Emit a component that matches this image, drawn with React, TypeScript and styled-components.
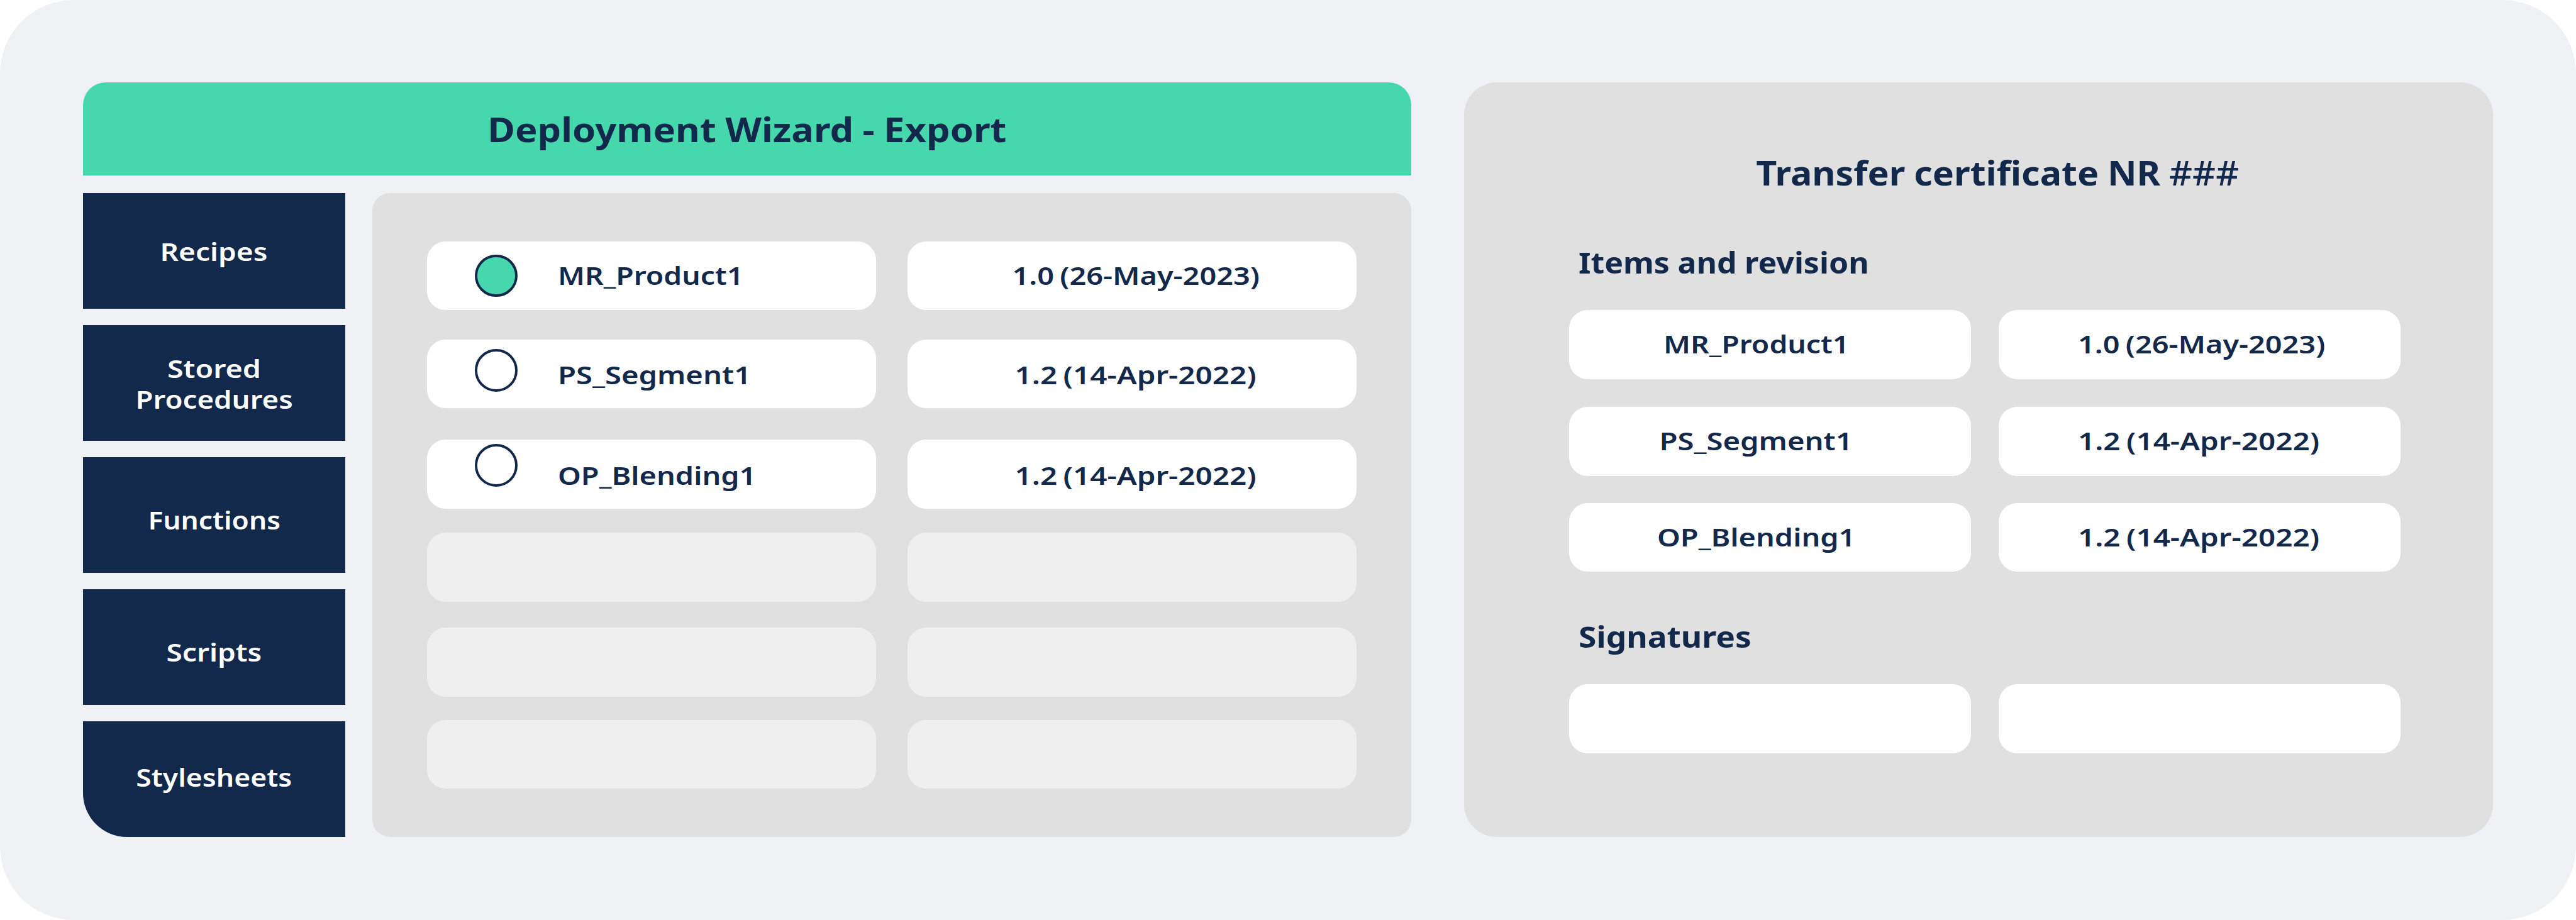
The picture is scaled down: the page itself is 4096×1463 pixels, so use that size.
import styled, { createGlobalStyle } from 'styled-components';

const navItems = [
  { lines: [{ text: 'Recipes', stretch: 1.141 }], drop: 1 },
  {
    lines: [
      { text: 'Stored', stretch: 1.156 },
      { text: 'Procedures', stretch: 1.131 },
    ],
    drop: 2,
  },
  { lines: [{ text: 'Functions', stretch: 1.099 }], drop: 8 },
  { lines: [{ text: 'Scripts', stretch: 1.144 }], drop: 8 },
  { lines: [{ text: 'Stylesheets', stretch: 1.104 }], drop: -2.8 },
];

const exportItems = [
  {
    name: 'MR_Product1',
    stretch: 1.147,
    version: '1.0 (26-May-2023)',
    versionStretch: 1.162,
    top: 0,
    drop: 0,
    lift: 0,
    selected: true,
  },
  {
    name: 'PS_Segment1',
    stretch: 1.171,
    version: '1.2 (14-Apr-2022)',
    versionStretch: 1.181,
    top: 46.6,
    drop: 1.3,
    lift: 5.4,
    selected: false,
  },
  {
    name: 'OP_Blending1',
    stretch: 1.162,
    version: '1.2 (14-Apr-2022)',
    versionStretch: 1.181,
    top: 49.6,
    drop: 2.3,
    lift: 13.6,
    selected: false,
  },
];

const emptyRows = [38.3, 41.5, 36.9];
const certificateGaps = [45.8, 44.4, 42.7];

const App = () => (
  <>
    <GlobalStyle />
    <Screen>
      <Wizard>
        <WizardHeader>
          <Title $stretch={1.1155}>Deployment Wizard - Export</Title>
        </WizardHeader>
        <WizardBody>
          <Nav>
            {navItems.map((item, index) => (
              <NavItem key={index} $drop={item.drop}>
                {item.lines.map((line) => (
                  <Label key={line.text} $stretch={line.stretch}>
                    {line.text}
                  </Label>
                ))}
              </NavItem>
            ))}
          </Nav>
          <Panel>
            {exportItems.map((item) => (
              <Row key={item.name} $top={item.top}>
                <Cell $align="start">
                  <Radio $selected={item.selected} $lift={item.lift} />
                  <Label $stretch={item.stretch} $drop={item.drop} $origin="left">
                    {item.name}
                  </Label>
                </Cell>
                <VersionCell>
                  <Label $stretch={item.versionStretch} $drop={item.drop}>
                    {item.version}
                  </Label>
                </VersionCell>
              </Row>
            ))}
            {emptyRows.map((top, index) => (
              <Row key={index} $top={top}>
                <Cell $empty />
                <Cell $empty />
              </Row>
            ))}
          </Panel>
        </WizardBody>
      </Wizard>
      <Certificate>
        <CertificateTitle>
          <Title $stretch={1.072}>
            Transfer certificate NR <Hashes>###</Hashes>
          </Title>
        </CertificateTitle>
        <Heading $top={77.9} $stretch={1.081}>
          Items and revision
        </Heading>
        {exportItems.map((item, index) => (
          <Row key={item.name} $top={certificateGaps[index]}>
            <NameCell>
              <Label $stretch={item.stretch} $drop={-0.6}>
                {item.name}
              </Label>
            </NameCell>
            <RevisionCell>
              <Label $stretch={item.versionStretch} $drop={-0.6} $origin="left">
                {item.version}
              </Label>
            </RevisionCell>
          </Row>
        ))}
        <Heading $top={73.5} $stretch={1.111}>
          Signatures
        </Heading>
        <Row $top={45.4}>
          <Cell />
          <Cell />
        </Row>
      </Certificate>
    </Screen>
  </>
);

export default App;

const GlobalStyle = createGlobalStyle`
  * {
    box-sizing: border-box;
  }
  body {
    margin: 0;
    background: #ffffff;
    color: #13294b;
    font-family: 'Noto Sans', sans-serif;
  }
`;

const Screen = styled.main`
  width: 4096px;
  height: 1463px;
  padding: 131.2px 131.8px 132px;
  display: flex;
  gap: 83.4px;
  background: #eff1f5;
  border-radius: 117px;
`;

const Wizard = styled.section`
  width: 2112.4px;
  display: flex;
  flex-direction: column;
  gap: 27.9px;
`;

const WizardHeader = styled.header`
  height: 148px;
  padding-top: 2px;
  display: flex;
  align-items: center;
  justify-content: center;
  background: #47d7ac;
  border-radius: 36px 36px 0 0;
`;

const Title = styled.h1<{ $stretch: number }>`
  margin: 0;
  font-size: 53.5px;
  font-weight: 700;
  line-height: 70px;
  word-spacing: -1px;
  white-space: nowrap;
  transform: scaleX(${({ $stretch }) => $stretch});
`;

const WizardBody = styled.div`
  flex-grow: 1;
  display: flex;
  gap: 43.2px;
`;

const Nav = styled.nav`
  width: 417px;
  display: flex;
  flex-direction: column;
  gap: 26.4px;
`;

const NavItem = styled.div<{ $drop: number }>`
  height: 183.7px;
  padding-top: ${({ $drop }) => Math.max($drop, 0) * 2}px;
  padding-bottom: ${({ $drop }) => Math.max(-$drop, 0) * 2}px;
  display: flex;
  flex-direction: column;
  align-items: center;
  justify-content: center;
  background: #13294b;
  color: #ffffff;
  &:last-child {
    border-bottom-left-radius: 70px;
  }
`;

const Label = styled.div<{ $stretch: number; $drop?: number; $origin?: string }>`
  margin-top: ${({ $drop = 0 }) => $drop * 2}px;
  font-size: 40.3px;
  font-weight: 600;
  line-height: 48.5px;
  word-spacing: -2.5px;
  white-space: nowrap;
  transform: scaleX(${({ $stretch }) => $stretch});
  transform-origin: ${({ $origin = 'center' }) => $origin};
`;

const Panel = styled.div`
  flex: 1;
  padding: 76.7px 87px 0;
  background: #e0e0e0;
  border-radius: 28px;
`;

const Row = styled.div<{ $top: number }>`
  height: 109.6px;
  margin-top: ${({ $top }) => $top}px;
  display: grid;
  grid-template-columns: 1fr 1fr;
  column-gap: 49.4px;
`;

const Cell = styled.div<{ $align?: string; $empty?: boolean }>`
  padding: 0 76px;
  display: flex;
  align-items: center;
  justify-content: ${({ $align = 'center' }) => $align};
  background: ${({ $empty }) => ($empty ? '#efefef' : '#ffffff')};
  border-radius: 29.5px;
`;

const VersionCell = styled(Cell)`
  padding: 0 0 0 12px;
`;

const NameCell = styled(Cell)`
  padding: 0 45px 0 0;
`;

const RevisionCell = styled(Cell)`
  padding: 0 0 0 126px;
  justify-content: start;
`;

const Radio = styled.span<{ $selected: boolean; $lift: number }>`
  width: 67.6px;
  height: 67.6px;
  margin-right: 64.4px;
  margin-bottom: ${({ $lift }) => $lift * 2}px;
  flex-shrink: 0;
  border: 4px solid #13294b;
  border-radius: 50%;
  background: ${({ $selected }) => ($selected ? '#47d7ac' : 'transparent')};
`;

const Certificate = styled.section`
  flex: 1;
  padding: 108.6px 146.9px 0 167.9px;
  background: #e0e0e0;
  border-radius: 52px;
  ${Row} {
    column-gap: 44px;
  }
`;

const CertificateTitle = styled.div`
  padding-left: 39px;
  display: flex;
  justify-content: center;
`;

const Hashes = styled.span`
  font-weight: 500;
`;

const Heading = styled.h2<{ $top: number; $stretch: number }>`
  width: max-content;
  margin: ${({ $top }) => $top}px 0 0 15px;
  font-size: 46.3px;
  font-weight: 700;
  line-height: 60px;
  word-spacing: -0.5px;
  transform: scaleX(${({ $stretch }) => $stretch});
  transform-origin: left;
`;
